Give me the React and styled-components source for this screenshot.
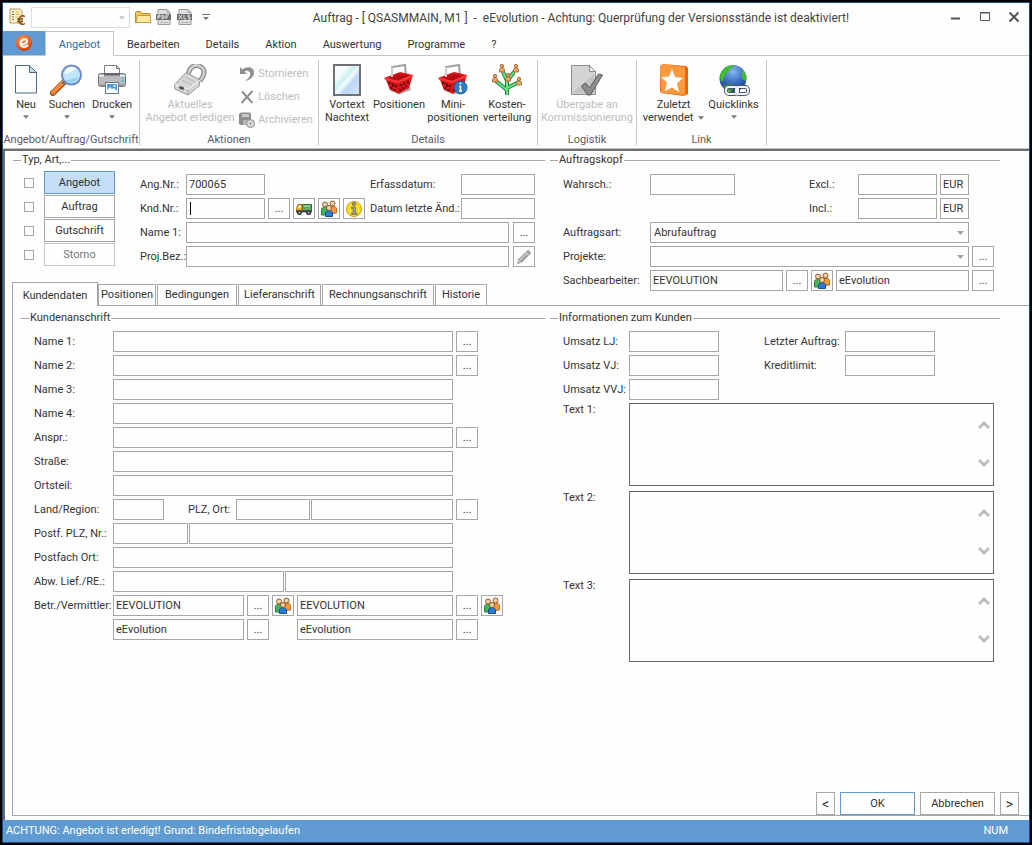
import React, { useState } from 'react';
import styled, { createGlobalStyle, css } from 'styled-components';

const uiFont = 'Roboto, "Liberation Sans", sans-serif';
const line = '#a6a6a6';

const GlobalStyle = createGlobalStyle`
  * {
    box-sizing: border-box;
  }

  body {
    background-color: #000000;
    color: #333333;
    font-family: ${uiFont};
    font-size: 11px;
    line-height: 14px;
    margin: 0;
  }

  button, input, select, textarea {
    border-radius: 0;
    color: inherit;
    font: inherit;
    margin: 0;
    outline: none;
    padding: 0;
  }
`;

const Window = styled.div`
  background-color: #fefefe;
  border: 2px solid #000000;
  display: flex;
  flex-direction: column;
  min-height: 100vh;
`;

const Frame = styled.div`
  border: 1px solid #1c4c8c;
  display: flex;
  flex: 1;
  flex-direction: column;
`;

const TitleBar = styled.header`
  align-items: center;
  display: flex;
  height: 28px;
  padding: 0 7px 0 6px;
`;

const QuickAccess = styled.div`
  align-items: center;
  display: flex;
  gap: 5px;
`;

const IconButton = styled.button`
  background: none;
  border: none;
  display: flex;
  height: 18px;
  justify-content: center;
  align-items: center;
  min-width: 16px;
`;

const Title = styled.h1`
  color: #444444;
  flex: 1;
  font-size: 12px;
  font-weight: 400;
  margin: 0;
  padding-top: 1px;
  text-align: center;
  white-space: pre;
`;

const WindowControls = styled.div`
  display: flex;
  gap: 13px;
`;

const MenuBar = styled.nav`
  border-bottom: 1px solid #c6c6c6;
  display: flex;
  height: 25px;
`;

const FileTab = styled.button`
  align-items: center;
  background-color: #5f9bd1;
  border: none;
  display: flex;
  justify-content: center;
  width: 42px;
`;

const MenuTab = styled.button`
  background-color: transparent;
  border: 1px solid transparent;
  border-bottom: none;
  height: 25px;
  padding: 1px 12px 0;
  ${props => props.$active && css`
    background-color: #fefefe;
    border-color: #c6c6c6;
    color: #2a6fa8;
    min-width: 69px;
  `}
`;

const Ribbon = styled.div`
  border-bottom: 1px solid #c0c0c0;
  display: flex;
  height: 93px;
  padding-top: 4px;
`;

const Group = styled.section`
  align-items: center;
  border-right: 1px solid #c6c6c6;
  display: flex;
  flex-direction: column;
  height: 85px;
  justify-content: space-between;
  width: ${props => props.$width}px;
`;

const GroupBody = styled.div`
  display: flex;
  flex: none;
  height: 72px;
  justify-content: center;
`;

const GroupName = styled.h2`
  color: #5a5a66;
  font-size: 11px;
  font-weight: 400;
  line-height: 10px;
  margin: 0;
  white-space: nowrap;
`;

const LargeButton = styled.button`
  align-items: center;
  background: none;
  border: none;
  display: flex;
  flex-direction: column;
  line-height: 13px;
  padding-top: 4px;
  white-space: nowrap;
  width: ${props => props.$width}px;
  &:disabled {
    color: #bdbdbd;
  }
`;

const LargeIcon = styled.span`
  display: block;
  height: 34px;
`;

const ButtonLine = styled.span`
  align-items: center;
  display: flex;
  gap: 5px;
  height: 13px;
`;

const SmallButtons = styled.div`
  display: flex;
  flex-direction: column;
  padding: 2px 0 0 4px;
`;

const SmallButton = styled.button`
  align-items: center;
  background: none;
  border: none;
  display: flex;
  flex: none;
  gap: 3px;
  height: 23px;
  white-space: nowrap;
  &:disabled {
    color: #bdbdbd;
  }
`;

const Content = styled.main`
  border-left: 2px solid #6e6e6e;
  border-top: 2px solid #6e6e6e;
  display: flex;
  flex: 1;
  flex-direction: column;
  padding-bottom: 4px;
`;

const Columns = styled.div`
  column-gap: 5px;
  display: grid;
  grid-template-columns: minmax(0, 1fr) 450px;
  padding: ${props => props.$padding};
`;

const Fieldset = styled.fieldset`
  border: none;
  border-top: 1px solid ${line};
  margin: 0;
  min-width: 0;
  padding: 0;
`;

const Legend = styled.legend`
  margin-left: 8px;
  padding: 0 1px;
`;

const FieldsetBody = styled.div`
  padding: ${props => props.$padding};
`;

const TypeArea = styled.div`
  display: flex;
  gap: 25px;
`;

const TypeList = styled.div`
  display: flex;
  flex-direction: column;
  gap: 1px;
`;

const TypeRow = styled.div`
  align-items: center;
  display: flex;
  gap: 10px;
`;

const CheckBox = styled.input`
  appearance: none;
  background-color: #fefefe;
  border: 1px solid ${line};
  height: 10px;
  width: 10px;
`;

const TypeButton = styled.button`
  background-color: ${props => (props.$active ? '#c5ddf5' : '#fefefe')};
  border: 1px solid ${props => (props.$active ? '#5f9bd1' : line)};
  height: 23px;
  padding-top: 1px;
  width: 71px;
  &:disabled {
    border-color: #c6c6c6;
    color: #777777;
  }
`;

const Rows = styled.div`
  display: flex;
  flex: 1;
  flex-direction: column;
  gap: 3px;
  padding-top: ${props => props.$top || 0}px;
`;

const Row = styled.div`
  align-items: ${props => (props.$top ? 'flex-start' : 'center')};
  display: flex;
  min-height: 21px;
`;

const Fields = styled.div`
  display: flex;
  flex: ${props => (props.$fixed ? 'none' : 1)};
  gap: ${props => props.$gap || 3}px;
  min-width: 0;
`;

const Trailing = styled.div`
  display: flex;
  gap: 3px;
  margin-left: 3px;
  width: 47px;
`;

const Label = styled.label`
  flex: none;
  white-space: nowrap;
  width: ${props => props.$width}px;
`;

const Spacer = styled.span`
  flex: ${props => (props.$width ? 'none' : 1)};
  width: ${props => props.$width || 0}px;
`;

const Input = styled.input`
  background-color: #fefefe;
  border: 1px solid ${line};
  flex: ${props => (props.$width ? 'none' : 1)};
  height: 21px;
  min-width: 0;
  padding: 0 2px 1px;
  width: ${props => (props.$width ? `${props.$width}px` : 'auto')};
  ${props => props.$caret && css`
    background-image: linear-gradient(#000000, #000000);
    background-position: 3px 3px;
    background-repeat: no-repeat;
    background-size: 1px 13px;
  `}
`;

const PickButton = styled.button`
  align-items: center;
  background-color: #fefefe;
  border: 1px solid ${line};
  display: flex;
  flex: none;
  height: 21px;
  justify-content: center;
  width: 22px;
`;

const SelectWrap = styled.div`
  flex: 1;
  position: relative;
`;

const Select = styled.select`
  appearance: none;
  background-color: #fefefe;
  border: 1px solid ${line};
  display: block;
  height: 21px;
  padding: 0 16px 0 3px;
  width: 100%;
`;

const SelectArrow = styled.span`
  display: flex;
  pointer-events: none;
  position: absolute;
  right: 5px;
  top: 5px;
`;

const QuickSelect = styled(Select)`
  border-color: #dcdcdc;
  width: 99px;
`;

const QuickWrap = styled(SelectWrap)`
  flex: none;
`;

const MemoWrap = styled.div`
  flex: 1;
  height: 83px;
  margin-bottom: 2px;
  position: relative;
`;

const Memo = styled.textarea`
  background-color: #fefefe;
  border: 1px solid #666666;
  display: block;
  height: 100%;
  overflow: hidden;
  padding: 2px 20px 2px 2px;
  resize: none;
  width: 100%;
`;

const MemoScroll = styled.div`
  bottom: 14px;
  display: flex;
  flex-direction: column;
  justify-content: space-between;
  position: absolute;
  right: 1px;
  top: 13px;
`;

const TabList = styled.div`
  align-items: flex-end;
  align-self: flex-start;
  display: flex;
  gap: 1px;
  margin: -9px 0 0 7px;
`;

const Tab = styled.button`
  background-color: #fefefe;
  border: 1px solid ${line};
  border-bottom: none;
  height: ${props => (props.$active ? 24 : 21)}px;
  margin-bottom: ${props => (props.$active ? -1 : 0)}px;
  padding: ${props => (props.$active ? '2px 0 0' : '0')};
  width: ${props => props.$width}px;
  ${props => props.$active && css`
    margin-right: -1px;
    position: relative;
  `}
`;

const TabPanel = styled.div`
  border: solid ${line};
  border-width: 1px 0 1px 1px;
  display: flex;
  flex: 1;
  flex-direction: column;
  margin-left: 7px;
`;

const Actions = styled.div`
  display: flex;
  gap: 5px;
  justify-content: flex-end;
  margin-top: auto;
  padding-right: 10px;
`;

const ActionButton = styled.button`
  background-color: #fefefe;
  border: 1px solid ${props => (props.$primary ? '#5f9bd1' : line)};
  font-size: ${props => (props.$narrow ? 14 : 11)}px;
  height: 23px;
  width: ${props => (props.$narrow ? 19 : 75)}px;
`;

const StatusBar = styled.footer`
  align-items: center;
  background-color: #5f9bd1;
  color: #ffffff;
  display: flex;
  height: 22px;
  justify-content: space-between;
  padding: 0 21px 0 3px;
`;

/* ---------- icons ---------- */

const Arrow = ({ color = '#777777', size = 7 }) => (
  <svg width={size} height="12" viewBox="0 0 7 12" aria-hidden="true">
    <path d="M0 4h7L3.500 8z" fill={color} />
  </svg>
);

const DocEuroIcon = () => (
  <svg width="17" height="18" viewBox="0 0 17 18">
    <path d="M1 1h10l2 2v12H1z" fill="#fff6cf" stroke="#b29a5c" />
    <path d="M3 4h2M3 6.500h2M3 9h2M3 11.500h2" stroke="#7a6a3a" />
    <path d="M6.500 4h4M6.500 6.500h4M6.500 9h2" stroke="#d3ae38" />
    <path d="M16 8.500c-3-2-6 0-6 3.500s3 5.500 6 3.500M8 11h6M8 13.500h6" fill="none" stroke="#8a4b12" strokeWidth="1.500" />
  </svg>
);

const FolderIcon = () => (
  <svg width="16" height="14" viewBox="0 0 16 14">
    <path d="M.5 12.500V2.500l1-1h4l1.500 2h8v9z" fill="#f0c75a" stroke="#b98a2a" />
    <path d="M1 12.500 2.500 5.500h13v7z" fill="#ffe9a3" stroke="#c79a3c" />
  </svg>
);

const ExportIcon = ({ label }) => (
  <svg width="16" height="16" viewBox="0 0 16 16">
    <path d="M2 .5h9l3 3v12H2z" fill="#dedede" stroke="#9a9a9a" />
    <path d="M11 .5v3h3" fill="none" stroke="#a5a5a5" />
    <rect x="0" y="5" width="15" height="6" fill="#707070" />
    <path d={label === 'x' ? 'M2 6l3 4M5 6l-3 4M7 6v4h2M13 6h-2v2h2v2h-2' : 'M2 10V6h2v2H2M6 6v4l2-1V7zM10 10V6h3M10 8h2'} stroke="#e6e6e6" fill="none" />
    <path d="M4 13.500h8" stroke="#b4b4b4" />
  </svg>
);

const BrandIcon = () => (
  <svg width="18" height="18" viewBox="0 0 18 18">
    <defs>
      <radialGradient id="brand" cx=".4" cy=".3" r=".8">
        <stop offset="0" stopColor="#ff9a55" />
        <stop offset=".6" stopColor="#ee5a1b" />
        <stop offset="1" stopColor="#c23a08" />
      </radialGradient>
    </defs>
    <circle cx="9" cy="9" r="8" fill="url(#brand)" />
    <path d="M5.500 10.500c4 0 7-1.500 6.500-4C11.500 4 5.500 5 5.500 9.500c0 4 4.500 4.500 7.500 1.500" fill="none" stroke="#ffffff" strokeWidth="2" />
  </svg>
);

const NewIcon = () => (
  <svg width="24" height="32" viewBox="0 0 24 32">
    <path d="M1.500 1.500h14l7 7v20.500h-21z" fill="#fdfeff" stroke="#4d6880" />
    <path d="M15.500 1.500v7h7z" fill="#bcdcf2" stroke="#4d6880" />
  </svg>
);

const SearchIcon = () => (
  <svg width="34" height="32" viewBox="0 0 34 32">
    <path d="M3 29 14 18" stroke="#8b4a18" strokeWidth="6" strokeLinecap="round" />
    <path d="M3 28.500 13.500 18" stroke="#f08a3c" strokeWidth="4" strokeLinecap="round" />
    <path d="M12.500 19.500l3-3" stroke="#5d6b86" strokeWidth="3" />
    <circle cx="21.500" cy="11" r="9.500" fill="#bfe6fb" stroke="#6c8cc4" strokeWidth="2" />
    <path d="M14.500 10a7 7 0 0 1 12-5c-3 1-7 5-12 5z" fill="#f2fbff" />
    <path d="M16 16a7 7 0 0 0 12-3c-4 1-7 3-12 3z" fill="#8fcdf3" />
  </svg>
);

const PrinterIcon = () => (
  <svg width="30" height="32" viewBox="0 0 30 32">
    <path d="M7.500 1.500h12l3 3V12h-15z" fill="#fbfbfb" stroke="#7d7d7d" />
    <path d="M19.500 1.500v3h3" fill="none" stroke="#7d7d7d" />
    <rect x="1.500" y="9.500" width="27" height="13" rx="2" fill="#b9bbbd" stroke="#737578" />
    <path d="M2 12h5M23 12h5" stroke="#e4e4e4" strokeWidth="2" />
    <path d="M7 10.500h16" stroke="#636568" strokeWidth="2" />
    <path d="M3 21.500h24" stroke="#8f9193" strokeWidth="2" />
    <path d="M25.500 13v5" stroke="#56c4d6" strokeWidth="2" strokeDasharray="2 1" />
    <rect x="8.500" y="18.500" width="13" height="11" fill="#ffffff" stroke="#6b7683" />
    <rect x="10" y="20" width="10" height="8" fill="#4f9fe0" />
    <path d="M10 28v-2l3-3 2 2 2-1 3 3v1z" fill="#f4fbff" />
    <circle cx="17.500" cy="22" r="1" fill="#ffffff" />
  </svg>
);

const LockIcon = () => (
  <svg width="34" height="32" viewBox="0 0 34 32">
    <path d="M15 12C16 3 22-1 28 3c6 4 2 10-1 14" fill="none" stroke="#8b8b8b" strokeWidth="5" />
    <path d="M15 12C16 3 22-1 28 3c6 4 2 10-1 14" fill="none" stroke="#cfcfcf" strokeWidth="2.500" />
    <path d="M1.500 20.500 13 8.500l14 7.500-1 6-11 9L2 25z" fill="#d6d6d6" stroke="#949494" />
    <path d="M1.500 20.500 15 25l12-9" fill="none" stroke="#f2f2f2" />
    <path d="M15 25v6" stroke="#a5a5a5" />
    <path d="M9 16l10 5M12 13l10 5" stroke="#b7b7b7" />
    <ellipse cx="8.500" cy="24" rx="3" ry="1.500" fill="#555555" transform="rotate(20 8.500 24)" />
  </svg>
);

const UndoIcon = () => (
  <svg width="16" height="16" viewBox="0 0 16 16">
    <path d="M1 1v7h7L5.500 5.500C9 3.500 12 6 11 9c-.5 2.500-2.500 4-5 6 5-1 9-4 9-8.500C15 1 8-.5 3.500 3.500z" fill="#8f8f8f" />
  </svg>
);

const DeleteIcon = () => (
  <svg width="16" height="16" viewBox="0 0 16 16">
    <path d="M3 2.500 13.500 14M13.500 2 2.500 14" stroke="#8f8f8f" strokeWidth="2" />
  </svg>
);

const ArchiveIcon = () => (
  <svg width="16" height="16" viewBox="0 0 16 16">
    <path d="M0 2 2 .5h9l1 1.500v11H2l-2-1z" fill="#8d8d8d" />
    <rect x="3" y="2" width="7" height="3" fill="#c8c8c8" />
    <path d="M4 8h5v5H4z" fill="#b9b9b9" />
    <circle cx="11.500" cy="11.500" r="4" fill="#dadada" stroke="#8b8b8b" />
    <circle cx="11.500" cy="11.500" r="1" fill="#8b8b8b" />
  </svg>
);

const TextIcon = () => (
  <svg width="28" height="32" viewBox="0 0 28 32">
    <defs>
      <linearGradient id="sheet" x1="0" y1="0" x2="1" y2="1">
        <stop offset="0" stopColor="#ffffff" />
        <stop offset=".3" stopColor="#f3fbfb" />
        <stop offset=".42" stopColor="#c8f2ee" />
        <stop offset=".52" stopColor="#f4fafd" />
        <stop offset=".64" stopColor="#bcd8f6" />
        <stop offset="1" stopColor="#d7e6fb" />
      </linearGradient>
    </defs>
    <rect x="1" y="1" width="26" height="30" fill="url(#sheet)" stroke="#6e7276" strokeWidth="2" />
  </svg>
);

const BasketIcon = ({ info }) => (
  <svg width="30" height="32" viewBox="0 0 30 32">
    <path d="M16 30l11-4-1-4z" fill="#a9a9a9" />
    <path d="M8 14V3l13-2 1 11" fill="none" stroke="#9e9e9e" strokeWidth="2" />
    <path d="M0 14 16 8l13 3-1 3-3 10-10 6-9-4L2 16z" fill="#dc141c" />
    <path d="M4 14.500 16 10l10 2-12 5z" fill="#b80c14" />
    <path d="M8 3v10" stroke="#c9c9c9" strokeWidth="2" />
    <path d="M5 18l1 2M8.500 19.500l.5 3M11.500 21l.5 2M7 23l.5 2M10.500 25v2M17 20l-.5 2M20.500 18.500l-.5 2M24 17l-.5 2M16.500 25l-.5 2M19.500 23l-.5 2M22.500 21.500l-.5 1" stroke="#4f0306" strokeWidth="2" />
    <path d="M1 14.500 14 18l14-6" fill="none" stroke="#ff3a3a" strokeWidth="2" />
    {info && (
      <>
        <circle cx="22.500" cy="23.500" r="6.500" fill="#2f7cc4" stroke="#1f5f9f" />
        <path d="M22.500 22v5M21 22.500h2M21 27h3" stroke="#ffffff" strokeWidth="1.500" />
        <circle cx="22.500" cy="19.500" r="1" fill="#ffffff" />
      </>
    )}
  </svg>
);

const TreePerson = ({ x, y }) => (
  <g transform={`translate(${x} ${y})`}>
    <circle cx="3" cy="2" r="1.700" fill="#e8a060" stroke="#9c5a20" strokeWidth=".8" />
    <path d="M.5 8V6c0-3 5-3 5 0v2z" fill="#eda868" stroke="#9c5a20" strokeWidth=".8" />
  </g>
);

const TreeIcon = () => (
  <svg width="32" height="32" viewBox="0 0 32 32">
    <path d="M16 31V14M16 26 5 17M16 24 28 18M16 17 12 8M17 16 23 8" fill="none" stroke="#1d8a3c" strokeWidth="4" />
    <path d="M16 31V14M16 26 5 17M16 24 28 18M16 17 12 8M17 16 23 8" fill="none" stroke="#6fe08a" strokeWidth="2" />
    <TreePerson x={8} y={0} />
    <TreePerson x={22} y={0} />
    <TreePerson x={1} y={10} />
    <TreePerson x={14} y={9} />
    <TreePerson x={25} y={13} />
  </svg>
);

const CheckDocIcon = () => (
  <svg width="34" height="32" viewBox="0 0 34 32">
    <path d="M1.500 1.500h18l6 6v23h-24z" fill="#d4d4d4" stroke="#8c8c8c" />
    <path d="M19.500 1.500v6h6z" fill="#efefef" stroke="#8c8c8c" />
    <path d="M3 28 24 10v19H3z" fill="#c2c2c2" />
    <path d="M11.500 22l4-3 4 5 9-14 4 1-12 20h-3z" fill="#8d8d8d" stroke="#5c5c5c" />
  </svg>
);

const StarIcon = () => (
  <svg width="30" height="32" viewBox="0 0 30 32">
    <path d="M1 2 4 0l23 2 2 2v26l-4 2L2 29 1 27z" fill="#e8650f" />
    <path d="M1 2 4 0l22 3v28L2 28.500z" fill="#fb9a3c" />
    <path d="M13 5l3 8 8 1-6 5.500 2 8.500-7-4.500L6 27l2-8.500L2 13l8-.5z" fill="#ffffff" />
  </svg>
);

const GlobeIcon = () => (
  <svg width="32" height="32" viewBox="0 0 32 32">
    <defs>
      <radialGradient id="globe" cx=".5" cy=".25" r=".8">
        <stop offset="0" stopColor="#86b8ee" />
        <stop offset=".5" stopColor="#3a6fc4" />
        <stop offset="1" stopColor="#17307c" />
      </radialGradient>
    </defs>
    <circle cx="15" cy="14.500" r="13.500" fill="url(#globe)" />
    <path d="M5 6C8 2 12 1 16 1.500 14 4 12 4 11 7c-2 2-4 2-4 5-2 1-1 5-3 6C1 14 2 9 5 6z" fill="#42c023" />
    <path d="M25 6c3 3 4 7 3 11-2-1-4-1-4-4 0-2-1-5 1-7z" fill="#42c023" />
    <path d="M8 21c3-2 6-1 8 2l-3 5c-4-1-7-3-8-6z" fill="#3aa51f" />
    <g fill="none" stroke="#4d5667" strokeWidth="4">
      <rect x="8" y="23" width="12" height="7" rx="3" />
      <rect x="18" y="23" width="12" height="7" rx="3" />
    </g>
    <g fill="none" stroke="#f0f3f8" strokeWidth="2">
      <rect x="8" y="23" width="12" height="7" rx="3" />
      <rect x="18" y="23" width="12" height="7" rx="3" />
    </g>
  </svg>
);

const TruckIcon = () => (
  <svg width="18" height="14" viewBox="0 0 18 14">
    <path d="M7.500 2.500h9v6h-9z" fill="#5fae62" stroke="#2f6b36" />
    <path d="M9 4h6" stroke="#b4e0a8" />
    <path d="M1.500 9.500v-3l1.500-4h4v7z" fill="#f6b51c" stroke="#a8700c" />
    <path d="M3 6l1-2.500h2V6z" fill="#d8f0fa" />
    <path d="M1 9.500h16" stroke="#444444" strokeWidth="2" />
    <circle cx="4.500" cy="10.500" r="2.500" fill="#333333" />
    <circle cx="13.500" cy="10.500" r="2.500" fill="#333333" />
    <circle cx="4.500" cy="10.500" r="1" fill="#bdbdbd" />
    <circle cx="13.500" cy="10.500" r="1" fill="#bdbdbd" />
  </svg>
);

const PeopleIcon = () => (
  <svg width="18" height="17" viewBox="0 0 18 17">
    <path d="M8.500 14V8.500c0-3 8-3 8 0V13z" fill="#f29a3a" stroke="#c46c14" />
    <circle cx="12.500" cy="3.500" r="2.500" fill="#f3cfa4" stroke="#8a5a2a" />
    <path d="M1.500 15V9.500c0-3 6-3 6 0V15z" fill="#46b35a" stroke="#22803a" />
    <circle cx="5" cy="4.500" r="2.500" fill="#f3cfa4" stroke="#8a5a2a" />
    <path d="M5.500 16.500V13c0-3 7-3 7 0v3.500z" fill="#2f7ad0" stroke="#164f9a" />
    <circle cx="9" cy="8" r="2.500" fill="#f3cfa4" stroke="#8a5a2a" />
  </svg>
);

const InfoIcon = () => (
  <svg width="18" height="18" viewBox="0 0 18 18">
    <circle cx="9" cy="9" r="7.500" fill="#f8dc1e" stroke="#c99c10" />
    <circle cx="9" cy="4" r="1.700" fill="#8c8c8c" stroke="#5e5e5e" strokeWidth=".6" />
    <path d="M6.500 7h4v6h1.500v1.500H6.500V13H8V8.500H6.500z" fill="#9a9a9a" stroke="#5e5e5e" strokeWidth=".6" />
  </svg>
);

const PencilIcon = () => (
  <svg width="16" height="16" viewBox="0 0 16 16">
    <path d="M1 15l1-4.500 9-9 1.500-.5 2.500 2.500-.5 1.500-9 9z" fill="#a2a2a2" />
    <path d="M4 11l7-7M9.500 3 13 6.500M2 11l3 3" stroke="#e4e4e4" />
  </svg>
);

const Chevron = ({ down }) => (
  <svg width="16" height="10" viewBox="0 0 16 10">
    <path d={down ? 'M2 2l5 5 5-5' : 'M2 8l5-5 5 5'} fill="none" stroke="#b9bfbf" strokeWidth="3" />
  </svg>
);

/* ---------- parts ---------- */

const More = ({ label }) => <PickButton type="button" aria-label={`${label} suchen`}>...</PickButton>;
const People = ({ label }) => <PickButton type="button" aria-label={`${label} Adresse`}><PeopleIcon /></PickButton>;

function RibbonButton({ icon, lines, width, drop, disabled }) {
  return (
    <LargeButton type="button" $width={width} disabled={disabled}>
      <LargeIcon>{icon}</LargeIcon>
      {lines.map((text, i) => (
        <ButtonLine key={text}>
          {text}
          {drop === 'inline' && i === lines.length - 1 && <Arrow size={6} />}
        </ButtonLine>
      ))}
      {drop === 'below' && <Arrow size={6} />}
    </LargeButton>
  );
}

function RibbonGroup({ name, width, children }) {
  return (
    <Group $width={width}>
      <GroupBody>{children}</GroupBody>
      <GroupName>{name}</GroupName>
    </Group>
  );
}

const menu = ['Angebot', 'Bearbeiten', 'Details', 'Aktion', 'Auswertung', 'Programme', '?'];
const types = ['Angebot', 'Auftrag', 'Gutschrift', 'Storno'];
const tabs = [
  { name: 'Kundendaten', width: 86 },
  { name: 'Positionen', width: 58 },
  { name: 'Bedingungen', width: 80 },
  { name: 'Lieferanschrift', width: 83 },
  { name: 'Rechnungsanschrift', width: 112 },
  { name: 'Historie', width: 52 },
];
const addressRows = [
  { name: 'Name 1:', more: true },
  { name: 'Name 2:', more: true },
  { name: 'Name 3:' },
  { name: 'Name 4:' },
  { name: 'Anspr.:', more: true },
  { name: 'Straße:' },
  { name: 'Ortsteil:' },
];

function Section({ title, padding, children }) {
  return (
    <Fieldset>
      <Legend>{title}</Legend>
      <FieldsetBody $padding={padding}>{children}</FieldsetBody>
    </Fieldset>
  );
}

function TypeSection() {
  const [type, setType] = useState('Angebot');

  return (
    <Section title="Typ, Art,..." padding="4px 10px 0 11px">
      <TypeArea>
        <TypeList>
          {types.map((el) => (
            <TypeRow key={el}>
              <CheckBox type="checkbox" aria-label={el} />
              <TypeButton
                type="button"
                $active={type === el}
                disabled={el === 'Storno'}
                onClick={() => setType(el)}
              >
                {el}
              </TypeButton>
            </TypeRow>
          ))}
        </TypeList>
        <Rows $top={3}>
          <Row>
            <Label $width={46} htmlFor="angnr">Ang.Nr.:</Label>
            <Input $width={79} id="angnr" defaultValue="700065" />
            <Spacer />
            <Label $width={91} htmlFor="erfasst">Erfassdatum:</Label>
            <Input $width={74} id="erfasst" />
          </Row>
          <Row>
            <Label $width={46} htmlFor="kndnr">Knd.Nr.:</Label>
            <Fields>
              <Input $width={79} $caret id="kndnr" />
              <More label="Kunde" />
              <PickButton type="button" aria-label="Lieferung"><TruckIcon /></PickButton>
              <People label="Kunde" />
              <PickButton type="button" aria-label="Info"><InfoIcon /></PickButton>
            </Fields>
            <Label $width={91} htmlFor="geaendert">Datum letzte Änd.:</Label>
            <Input $width={74} id="geaendert" />
          </Row>
          <Row>
            <Label $width={46} htmlFor="name">Name 1:</Label>
            <Fields $gap={4}>
              <Input id="name" />
              <More label="Name" />
            </Fields>
          </Row>
          <Row>
            <Label $width={46} htmlFor="projbez">Proj.Bez.:</Label>
            <Fields $gap={4}>
              <Input id="projbez" />
              <PickButton type="button" aria-label="Bearbeiten"><PencilIcon /></PickButton>
            </Fields>
          </Row>
        </Rows>
      </TypeArea>
    </Section>
  );
}

function HeadSection() {
  return (
    <Section title="Auftragskopf" padding="7px 6px 0 13px">
      <Rows>
        <Row>
          <Label $width={87} htmlFor="wahrsch">Wahrsch.:</Label>
          <Input $width={85} id="wahrsch" />
          <Spacer />
          <Label $width={49} htmlFor="excl">Excl.:</Label>
          <Fields $fixed>
            <Input $width={79} id="excl" />
            <Input $width={29} aria-label="Währung Excl." defaultValue="EUR" readOnly />
            <Spacer $width={22} />
          </Fields>
        </Row>
        <Row>
          <Spacer />
          <Label $width={49} htmlFor="incl">Incl.:</Label>
          <Fields $fixed>
            <Input $width={79} id="incl" />
            <Input $width={29} aria-label="Währung Incl." defaultValue="EUR" readOnly />
            <Spacer $width={22} />
          </Fields>
        </Row>
        <Row>
          <Label $width={87} htmlFor="art">Auftragsart:</Label>
          <Fields>
            <SelectWrap>
              <Select id="art"><option>Abrufauftrag</option></Select>
              <SelectArrow><Arrow color="#a0a0a0" /></SelectArrow>
            </SelectWrap>
            <Spacer $width={22} />
          </Fields>
        </Row>
        <Row>
          <Label $width={87} htmlFor="projekte">Projekte:</Label>
          <Fields>
            <SelectWrap>
              <Select id="projekte"><option> </option></Select>
              <SelectArrow><Arrow color="#a0a0a0" /></SelectArrow>
            </SelectWrap>
            <More label="Projekte" />
          </Fields>
        </Row>
        <Row>
          <Label $width={87} htmlFor="bearbeiter">Sachbearbeiter:</Label>
          <Fields>
            <Input id="bearbeiter" defaultValue="EEVOLUTION" />
            <More label="Sachbearbeiter" />
            <People label="Sachbearbeiter" />
            <Input aria-label="Name Sachbearbeiter" defaultValue="eEvolution" />
            <More label="Name" />
          </Fields>
        </Row>
      </Rows>
    </Section>
  );
}

function AddressSection() {
  return (
    <Section title="Kundenanschrift" padding="6px 42px 0 13px">
      <Rows>
        {addressRows.map((el, i) => (
          <Row key={el.name}>
            <Label $width={79} htmlFor={`adr${i}`}>{el.name}</Label>
            <Fields><Input id={`adr${i}`} /></Fields>
            <Trailing>{el.more && <More label={el.name} />}</Trailing>
          </Row>
        ))}
        <Row>
          <Label $width={79} htmlFor="land">Land/Region:</Label>
          <Input $width={51} id="land" />
          <Spacer $width={24} />
          <Label $width={48} htmlFor="plz">PLZ, Ort:</Label>
          <Fields $gap={1}>
            <Input $width={74} id="plz" />
            <Input aria-label="Ort" />
          </Fields>
          <Trailing><More label="Ort" /></Trailing>
        </Row>
        <Row>
          <Label $width={79} htmlFor="postf">Postf. PLZ, Nr.:</Label>
          <Fields $gap={1}>
            <Input $width={75} id="postf" />
            <Input aria-label="Postfach Nr." />
          </Fields>
          <Trailing />
        </Row>
        <Row>
          <Label $width={79} htmlFor="postfort">Postfach Ort:</Label>
          <Fields><Input id="postfort" /></Fields>
          <Trailing />
        </Row>
        <Row>
          <Label $width={79} htmlFor="abw">Abw. Lief./RE.:</Label>
          <Fields $gap={1}>
            <Input $width={171} id="abw" />
            <Input aria-label="Rechnungsempfänger" />
          </Fields>
          <Trailing />
        </Row>
        <Row>
          <Label $width={79} htmlFor="betr">Betr./Vermittler:</Label>
          <Fields>
            <Input $width={131} id="betr" defaultValue="EEVOLUTION" />
            <More label="Betreuer" />
            <People label="Betreuer" />
            <Input aria-label="Vermittler" defaultValue="EEVOLUTION" />
          </Fields>
          <Trailing><More label="Vermittler" /><People label="Vermittler" /></Trailing>
        </Row>
        <Row>
          <Spacer $width={79} />
          <Fields>
            <Input $width={131} aria-label="Name Betreuer" defaultValue="eEvolution" />
            <More label="Name Betreuer" />
            <Spacer $width={22} />
            <Input aria-label="Name Vermittler" defaultValue="eEvolution" />
          </Fields>
          <Trailing><More label="Name Vermittler" /></Trailing>
        </Row>
      </Rows>
    </Section>
  );
}

function InfoSection() {
  return (
    <Section title="Informationen zum Kunden" padding="6px 6px 0 13px">
      <Rows>
        <Row>
          <Label $width={66} htmlFor="lj">Umsatz LJ:</Label>
          <Input $width={90} id="lj" />
          <Spacer $width={45} />
          <Label $width={81} htmlFor="letzter">Letzter Auftrag:</Label>
          <Input $width={90} id="letzter" />
        </Row>
        <Row>
          <Label $width={66} htmlFor="vj">Umsatz VJ:</Label>
          <Input $width={90} id="vj" />
          <Spacer $width={45} />
          <Label $width={81} htmlFor="kredit">Kreditlimit:</Label>
          <Input $width={90} id="kredit" />
        </Row>
        <Row>
          <Label $width={66} htmlFor="vvj">Umsatz VVJ:</Label>
          <Input $width={90} id="vvj" />
        </Row>
        {[1, 2, 3].map((n) => (
          <Row key={n} $top>
            <Label $width={66} htmlFor={`text${n}`}>{`Text ${n}:`}</Label>
            <MemoWrap>
              <Memo id={`text${n}`} />
              <MemoScroll>
                <IconButton type="button" aria-label="Nach oben"><Chevron /></IconButton>
                <IconButton type="button" aria-label="Nach unten"><Chevron down /></IconButton>
              </MemoScroll>
            </MemoWrap>
          </Row>
        ))}
      </Rows>
    </Section>
  );
}

function App() {
  const [tab, setTab] = useState('Kundendaten');

  return (
    <Window>
      <GlobalStyle />
      <Frame>
        <TitleBar>
          <QuickAccess>
            <DocEuroIcon />
            <QuickWrap>
              <QuickSelect aria-label="Schnellauswahl"><option> </option></QuickSelect>
              <SelectArrow><Arrow color="#c6c6c6" size={6} /></SelectArrow>
            </QuickWrap>
            <IconButton type="button" aria-label="Öffnen"><FolderIcon /></IconButton>
            <IconButton type="button" aria-label="PDF"><ExportIcon label="p" /></IconButton>
            <IconButton type="button" aria-label="XLS"><ExportIcon label="x" /></IconButton>
            <IconButton type="button" aria-label="Anpassen">
              <svg width="8" height="8" viewBox="0 0 8 8"><path d="M0 1.500h8" stroke="#777777" /><path d="M1 4h6L4 7z" fill="#777777" /></svg>
            </IconButton>
          </QuickAccess>
          <Title>{'Auftrag - [ QSASMMAIN, M1 ]  -  eEvolution - Achtung: Querprüfung der Versionsstände ist deaktiviert!'}</Title>
          <WindowControls>
            <IconButton type="button" aria-label="Minimieren">
              <svg width="12" height="12" viewBox="0 0 12 12"><path d="M1 7.500h9" stroke="#555555" strokeWidth="2" /></svg>
            </IconButton>
            <IconButton type="button" aria-label="Maximieren">
              <svg width="12" height="12" viewBox="0 0 12 12"><path d="M1.500 1.500h9v8h-9zM1 2h10" stroke="#555555" fill="none" /></svg>
            </IconButton>
            <IconButton type="button" aria-label="Schließen">
              <svg width="12" height="12" viewBox="0 0 12 12"><path d="M1.500 1.500l9 9M10.500 1.500l-9 9" stroke="#555555" strokeWidth="2" /></svg>
            </IconButton>
          </WindowControls>
        </TitleBar>
        <MenuBar>
          <FileTab type="button" aria-label="eEvolution"><BrandIcon /></FileTab>
          {menu.map((el, i) => <MenuTab type="button" key={el} $active={i === 0}>{el}</MenuTab>)}
        </MenuBar>
        <Ribbon>
          <RibbonGroup name="Angebot/Auftrag/Gutschrift" width={137}>
            <RibbonButton icon={<NewIcon />} lines={['Neu']} width={40} drop="below" />
            <RibbonButton icon={<SearchIcon />} lines={['Suchen']} width={42} drop="below" />
            <RibbonButton icon={<PrinterIcon />} lines={['Drucken']} width={48} drop="below" />
          </RibbonGroup>
          <RibbonGroup name="Aktionen" width={179}>
            <RibbonButton icon={<LockIcon />} lines={['Aktuelles', 'Angebot erledigen']} width={90} disabled />
            <SmallButtons>
              <SmallButton type="button" disabled><UndoIcon />Stornieren</SmallButton>
              <SmallButton type="button" disabled><DeleteIcon />Löschen</SmallButton>
              <SmallButton type="button" disabled><ArchiveIcon />Archivieren</SmallButton>
            </SmallButtons>
          </RibbonGroup>
          <RibbonGroup name="Details" width={219}>
            <RibbonButton icon={<TextIcon />} lines={['Vortext', 'Nachtext']} width={50} />
            <RibbonButton icon={<BasketIcon />} lines={['Positionen']} width={54} />
            <RibbonButton icon={<BasketIcon info />} lines={['Mini-', 'positionen']} width={54} />
            <RibbonButton icon={<TreeIcon />} lines={['Kosten-', 'verteilung']} width={54} />
          </RibbonGroup>
          <RibbonGroup name="Logistik" width={99}>
            <RibbonButton icon={<CheckDocIcon />} lines={['Übergabe an', 'Kommissionierung']} width={90} disabled />
          </RibbonGroup>
          <RibbonGroup name="Link" width={130}>
            <RibbonButton icon={<StarIcon />} lines={['Zuletzt', 'verwendet']} width={64} drop="inline" />
            <RibbonButton icon={<GlobeIcon />} lines={['Quicklinks']} width={56} drop="below" />
          </RibbonGroup>
        </Ribbon>
        <Content>
          <Columns $padding="2px 29px 0 8px">
            <TypeSection />
            <HeadSection />
          </Columns>
          <TabList role="tablist">
            {tabs.map((el) => (
              <Tab
                key={el.name}
                type="button"
                role="tab"
                aria-selected={tab === el.name}
                $active={tab === el.name}
                $width={el.width}
                onClick={() => setTab(el.name)}
              >
                {el.name}
              </Tab>
            ))}
          </TabList>
          <TabPanel role="tabpanel">
            <Columns $padding="5px 29px 10px 8px">
              <AddressSection />
              <InfoSection />
            </Columns>
            <Actions>
              <ActionButton type="button" $narrow>&lt;</ActionButton>
              <ActionButton type="button" $primary>OK</ActionButton>
              <ActionButton type="button">Abbrechen</ActionButton>
              <ActionButton type="button" $narrow>&gt;</ActionButton>
            </Actions>
          </TabPanel>
        </Content>
        <StatusBar>
          <span>ACHTUNG: Angebot ist erledigt! Grund: Bindefristabgelaufen</span>
          <span>NUM</span>
        </StatusBar>
      </Frame>
    </Window>
  );
}

export default App;
